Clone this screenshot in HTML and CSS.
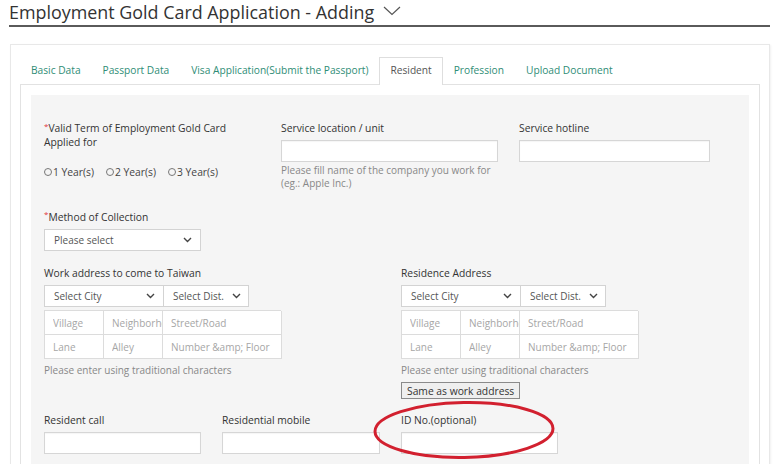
FILE: index.html
```html
<!DOCTYPE html>
<html>
<head>
<meta charset="utf-8">
<title>Employment Gold Card Application - Adding</title>
<link rel="stylesheet" href="styles.css">
</head>
<body>
<div class="page">
  <div class="title-bar">
    <h1 class="title">Employment Gold Card Application - Adding</h1>
    <svg class="title-chev" width="18" height="10" viewBox="0 0 18 10"><polyline points="1,1 9,8.5 17,1" fill="none" stroke="#555" stroke-width="1.2"/></svg>
  </div>

  <div class="card">
    <ul class="tabs">
      <li class="tab">Basic Data</li>
      <li class="tab">Passport Data</li>
      <li class="tab">Visa Application(Submit the Passport)</li>
      <li class="tab active">Resident</li>
      <li class="tab">Profession</li>
      <li class="tab">Upload Document</li>
    </ul>
    <div class="tab-body">
      <div class="panel">

        <div class="row row1">
          <div class="field col-a">
            <div class="label label-multi"><span class="req">*</span>Valid Term of Employment Gold Card<br>Applied for</div>
            <div class="radios">
              <span class="radio"><span class="dot"></span>1 Year(s)</span>
              <span class="radio"><span class="dot"></span>2 Year(s)</span>
              <span class="radio"><span class="dot"></span>3 Year(s)</span>
            </div>
          </div>
          <div class="field col-b">
            <div class="label">Service location / unit</div>
            <input class="input" type="text">
            <div class="help">Please fill name of the company you work for<br>(eg.: Apple Inc.)</div>
          </div>
          <div class="field col-c">
            <div class="label">Service hotline</div>
            <input class="input" type="text">
          </div>
        </div>

        <div class="row row2">
          <div class="field">
            <div class="label"><span class="req">*</span>Method of Collection</div>
            <div class="select sel-method"><span>Please select</span>
              <svg class="chev" width="9" height="6" viewBox="0 0 9 6"><polyline points="1,1 4.5,4.5 8,1" fill="none" stroke="#444" stroke-width="1.4"/></svg>
            </div>
          </div>
        </div>

        <div class="row row3">
          <div class="address">
            <div class="label">Work address to come to Taiwan</div>
            <div class="addr-selects">
              <div class="select sel-city"><span>Select City</span>
                <svg class="chev" width="9" height="6" viewBox="0 0 9 6"><polyline points="1,1 4.5,4.5 8,1" fill="none" stroke="#444" stroke-width="1.4"/></svg>
              </div>
              <div class="select sel-dist"><span>Select Dist.</span>
                <svg class="chev" width="9" height="6" viewBox="0 0 9 6"><polyline points="1,1 4.5,4.5 8,1" fill="none" stroke="#444" stroke-width="1.4"/></svg>
              </div>
            </div>
            <div class="addr-grid">
              <input class="cell" type="text" placeholder="Village">
              <input class="cell" type="text" placeholder="Neighborhood">
              <input class="cell" type="text" placeholder="Street/Road">
              <input class="cell" type="text" placeholder="Lane">
              <input class="cell" type="text" placeholder="Alley">
              <input class="cell" type="text" placeholder="Number &amp;amp; Floor">
            </div>
            <div class="help help-addr">Please enter using traditional characters</div>
          </div>
          <div class="address">
            <div class="label">Residence Address</div>
            <div class="addr-selects">
              <div class="select sel-city"><span>Select City</span>
                <svg class="chev" width="9" height="6" viewBox="0 0 9 6"><polyline points="1,1 4.5,4.5 8,1" fill="none" stroke="#444" stroke-width="1.4"/></svg>
              </div>
              <div class="select sel-dist"><span>Select Dist.</span>
                <svg class="chev" width="9" height="6" viewBox="0 0 9 6"><polyline points="1,1 4.5,4.5 8,1" fill="none" stroke="#444" stroke-width="1.4"/></svg>
              </div>
            </div>
            <div class="addr-grid">
              <input class="cell" type="text" placeholder="Village">
              <input class="cell" type="text" placeholder="Neighborhood">
              <input class="cell" type="text" placeholder="Street/Road">
              <input class="cell" type="text" placeholder="Lane">
              <input class="cell" type="text" placeholder="Alley">
              <input class="cell" type="text" placeholder="Number &amp;amp; Floor">
            </div>
            <div class="help help-addr">Please enter using traditional characters</div>
            <button class="btn-same" type="button">Same as work address</button>
          </div>
        </div>

        <div class="row row4">
          <div class="field col-s">
            <div class="label">Resident call</div>
            <input class="input" type="text">
          </div>
          <div class="field col-m">
            <div class="label">Residential mobile</div>
            <input class="input" type="text">
          </div>
          <div class="field col-s">
            <div class="label">ID No.(optional)</div>
            <input class="input" type="text">
          </div>
        </div>

      </div>
    </div>
  </div>

  <svg class="annotation" width="200" height="70" viewBox="0 0 200 70">
    <ellipse cx="95" cy="34" rx="89" ry="27.5" fill="none" stroke="#d2202f" stroke-width="3" transform="rotate(-1 95 34)"/>
  </svg>
</div>
</body>
</html>
```

FILE: styles.css
```css
* { box-sizing: border-box; }

html, body {
  margin: 0;
  padding: 0;
  background: #ffffff;
}

body {
  font-family: "Open Sans", "Noto Sans", "Liberation Sans", sans-serif;
  color: #333;
}

.page {
  position: relative;
  width: 776px;
  height: 464px;
  overflow: hidden;
}

/* Title */
.title-bar {
  display: flex;
  align-items: center;
  margin-left: 9px;
  width: 761px;
  height: 27px;
  border-bottom: 2px solid #5a5a5a;
}

.title {
  margin: 0;
  font-size: 17.9px;
  font-weight: 400;
  line-height: 25px;
  color: #333;
}

.title-chev {
  margin-left: 9px;
  margin-top: -3px;
}

/* Card + tabs */
.card {
  margin: 17px 6px 0 10px;
  border: 1px solid #e8e8e8;
  box-shadow: 1px 1px 2px rgba(0, 0, 0, 0.06);
  padding: 12px 9px 0 9px;
}

.tabs {
  display: flex;
  list-style: none;
  margin: 0;
  padding: 0;
  height: 27px;
}

.tab {
  padding: 0 10px;
  height: 27px;
  line-height: 25px;
  font-size: 10.2px;
  color: #2f8d76;
  border: 1px solid transparent;
  border-bottom: none;
  white-space: nowrap;
}

.tab.active {
  color: #555;
  background: #fff;
  border-color: #dedede;
  height: 28px;
  margin-bottom: -1px;
  position: relative;
  z-index: 1;
}

.tab-body {
  border: 1px solid #e2e2e2;
  padding: 10px;
}

.panel {
  background: #f5f5f5;
  padding: 25px 13px 30px 13px;
}

/* Rows / fields */
.row {
  display: flex;
  align-items: flex-start;
}

.row1 { gap: 20px; }
.row2 { margin-top: 19px; }
.row3 { margin-top: 14px; gap: 120px; }
.row4 { margin-top: 13px; gap: 21px; }

.col-a { width: 217px; }
.col-b { width: 217px; }
.col-c { width: 191px; margin-left: 1px; }
.col-s { width: 157px; }
.col-m { width: 158px; }

.label {
  font-size: 10.3px;
  line-height: 16px;
  margin-bottom: 4px;
  color: #333;
  white-space: nowrap;
}

.label-multi {
  line-height: 14px;
  margin-top: 1px;
  margin-bottom: 0;
}

.req {
  color: #e0333a;
  font-size: 8px;
  vertical-align: top;
  line-height: 10px;
}

.input {
  display: block;
  width: 100%;
  height: 22px;
  margin: 0;
  padding: 0 6px;
  background: #fff;
  border: 1px solid #d6d6d6;
  border-radius: 0;
  box-shadow: inset 0 1px 1px rgba(0, 0, 0, 0.04);
  font-family: "Open Sans", "Noto Sans", "Liberation Sans", sans-serif;
  font-size: 10px;
  outline: none;
}

.help {
  margin-top: 2px;
  font-size: 10px;
  line-height: 13px;
  color: #888;
  white-space: nowrap;
}

.help-addr { margin-top: 5px; }

/* Radios */
.radios {
  display: flex;
  gap: 12px;
  margin-top: 16px;
  font-size: 10.3px;
  line-height: 14px;
  color: #444;
}

.radio {
  display: flex;
  align-items: center;
  white-space: nowrap;
}

.dot {
  width: 8px;
  height: 8px;
  border: 1px solid #777;
  border-radius: 50%;
  margin-right: 1px;
}

/* Selects */
.select {
  display: flex;
  align-items: center;
  justify-content: space-between;
  height: 22px;
  background: #fff;
  border: 1px solid #d3d3d3;
  padding: 0 8px 0 9px;
  font-size: 10px;
  color: #555;
  white-space: nowrap;
}

.sel-method { width: 157px; }
.sel-city { width: 120px; }
.sel-dist { width: 86px; margin-left: -1px; padding-right: 7px; }

/* Address */
.address { width: 237px; }

.addr-selects { display: flex; }

.addr-grid {
  margin-top: 3px;
  display: grid;
  grid-template-columns: 59px 59px 119px;
  grid-auto-rows: 24px;
  border-top: 1px solid #dcdcdc;
  border-left: 1px solid #dcdcdc;
}

.cell {
  display: block;
  width: 100%;
  height: 24px;
  margin: 0;
  background: #fff;
  border: none;
  border-right: 1px solid #dcdcdc;
  border-bottom: 1px solid #dcdcdc;
  border-radius: 0;
  padding: 0 0 0 8px;
  font-family: "Open Sans", "Noto Sans", "Liberation Sans", sans-serif;
  font-size: 10px;
  color: #333;
  outline: none;
}

.cell::placeholder {
  color: #a6a6a6;
  opacity: 1;
}

.btn-same {
  display: block;
  margin-top: 5px;
  height: 17px;
  padding: 0 5px;
  font-family: "Open Sans", "Noto Sans", "Liberation Sans", sans-serif;
  font-size: 10.3px;
  line-height: 14px;
  color: #333;
  background: #efefef;
  border: 1px solid #8a8a8a;
  border-radius: 0;
}

/* Annotation overlay */
.annotation {
  position: absolute;
  left: 369px;
  top: 396px;
}
```
